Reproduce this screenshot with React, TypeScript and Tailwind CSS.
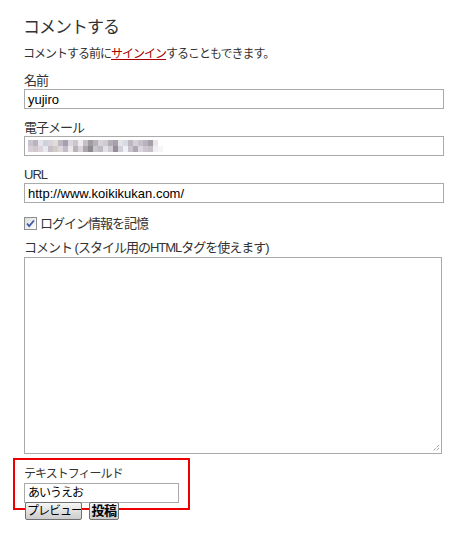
import React from "react";

const font = "font-['Liberation_Sans','Noto_Sans_CJK_JP',sans-serif]";

// pixelated blur over the e-mail address
const blurCols = [
  ["#c9c4cf", "#d6d0d6"], ["#b9b3bf", "#cfc8cc"], ["#e7e3ea", "#dcd6dc"], ["#ccd3dc", "#e6eaef"],
  ["#d8d4dc", "#c6c0c8"], ["#e2ddd4", "#d2ccc4"], ["#bfb8c4", "#ddd8dc"], ["#a79eb0", "#c2bcc6"],
  ["#d9d6dd", "#ece9ec"], ["#cbc5ce", "#b8b2bb"], ["#eeeaee", "#d9d4da"], ["#c4c0c6", "#aaa6ab"],
  ["#9e9ba1", "#8d8b8f"], ["#b5b2b8", "#c9c6cb"], ["#d7d4d9", "#bdbac0"], ["#cfcbd2", "#e3e0e5"],
  ["#b3adb7", "#d0cad2"], ["#a89fac", "#968f99"], ["#e5e2e8", "#d3cfd6"], ["#d6dbe6", "#eef0f5"],
  ["#bcb7c0", "#c9c4cb"], ["#d4d0d6", "#aea8b2"], ["#c6c0c9", "#dcd7de"], ["#b9b3bd", "#ccc6cf"],
  ["#a59fa9", "#c5c0c8"], ["#e9e6ea", "#f2eff3"], ["#ffffff", "#f6f6f8"], ["#ffffff", "#ffffff"],
];

function BlurredEmail() {
  return (
    <svg width="140" height="12" viewBox="0 0 140 12">
      {blurCols.map((c, i) => (
        <g key={i}>
          <rect x={i * 5} y={0} width={5} height={6} fill={c[0]} />
          <rect x={i * 5} y={6} width={5} height={6} fill={c[1]} />
        </g>
      ))}
    </svg>
  );
}

function Field({ label, children }: { label: string; children: React.ReactNode }) {
  return (
    <div className="flex flex-col">
      <label className="h-[16px] leading-[16px] text-[13px] tracking-[-1px] text-[#333]">{label}</label>
      {children}
    </div>
  );
}

function TextBox({ value }: { value?: React.ReactNode }) {
  return (
    <div className="w-[420px] h-[20px] border border-[#aaaaaa] bg-white flex items-center pl-[3px] text-[13px] text-black leading-none">
      {value}
    </div>
  );
}

export default function App() {
  return (
    <div className={`${font} w-[470px] h-[544px] bg-white text-[#333] pl-[23px] pt-[16px]`}>
      <h2 className="h-[24px] leading-[24px] text-[17px] tracking-[-1px] text-[#333]">コメントする</h2>
      <p className="mt-[5px] h-[18px] leading-[18px] text-[12px] tracking-[-1px]">
        コメントする前に
        <a href="#" className="text-[#aa0000] underline">サインイン</a>
        することもできます。
      </p>

      <div className="mt-[10px] pl-[1px] flex flex-col gap-[11px]">
        <Field label="名前">
          <TextBox value="yujiro" />
        </Field>
        <Field label="電子メール">
          <TextBox value={<BlurredEmail />} />
        </Field>
        <Field label="URL">
          <TextBox value="http://www.koikikukan.com/" />
        </Field>
      </div>

      <div className="mt-[12px] pl-[1px] h-[17px] flex items-center gap-[3px]">
        <svg width="13" height="13" viewBox="0 0 13 13">
          <defs>
            <linearGradient id="cb" x1="0" y1="0" x2="1" y2="1">
              <stop offset="0" stopColor="#dcdcdc" />
              <stop offset="1" stopColor="#ffffff" />
            </linearGradient>
          </defs>
          <rect x="0.5" y="0.5" width="12" height="12" fill="url(#cb)" stroke="#8e8f8f" />
          <path d="M3 6.5 L5.2 9.2 L10 3.5" fill="none" stroke="#3f58a8" strokeWidth="1.8" />
        </svg>
        <span className="text-[13px] tracking-[-1px] leading-[17px]">ログイン情報を記憶</span>
      </div>

      <div className="mt-[8px] pl-[1px] flex flex-col">
        <label className="h-[17px] leading-[16px] text-[13px] tracking-[-1px]">コメント (スタイル用のHTMLタグを使えます)</label>
        <div className="relative w-[418px] h-[197px] border border-[#aaaaaa] bg-white">
          <svg className="absolute right-[1px] bottom-[1px]" width="9" height="9" viewBox="0 0 9 9">
            <path d="M8 2 L2 8 M8 5 L5 8" stroke="#777" strokeWidth="1" strokeDasharray="1 1" />
          </svg>
        </div>
      </div>

      <div className="mt-[4px] -ml-[10px] w-[177px] h-[52px] border-2 border-[#ee0000] pl-[9px] pt-[5px] flex flex-col">
        <label className="h-[18px] leading-[18px] text-[12px] tracking-[-1px]">テキストフィールド</label>
        <div className="w-[155px] h-[20px] border border-[#aaaaaa] bg-white flex items-center pl-[3px] text-[12px] tracking-[-1px] text-black">
          あいうえお
        </div>
      </div>

      <div className="relative -mt-[8px] pl-[2px] flex gap-[7px]">
        <button className="w-[57px] h-[18px] shrink-0 overflow-hidden rounded-[2px] border border-[#707070] bg-gradient-to-b from-[#f6f6f6] to-[#cccccc] pl-[1px] text-left text-[12px] leading-[14px] text-black tracking-[-1px] whitespace-nowrap">
          プレビュー
        </button>
        <button className="w-[30px] h-[18px] shrink-0 overflow-hidden rounded-[2px] border border-[#707070] bg-gradient-to-b from-[#f6f6f6] to-[#cccccc] text-center text-[13px] leading-[14px] font-bold text-black tracking-[-0.5px] whitespace-nowrap">
          投稿
        </button>
      </div>
    </div>
  );
}
